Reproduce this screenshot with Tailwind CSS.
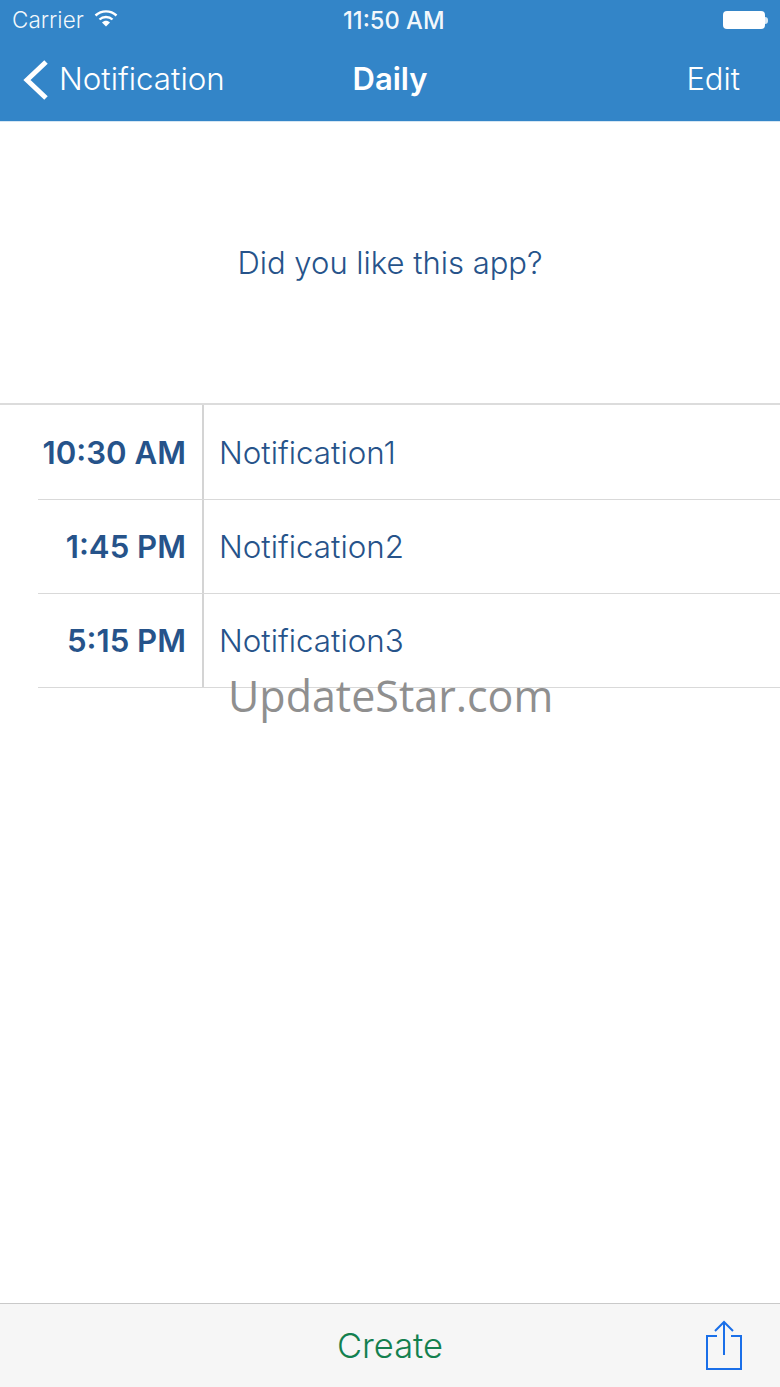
<!DOCTYPE html>
<html lang="en">
<head>
  <meta charset="UTF-8">
  <meta name="viewport" content="width=device-width, initial-scale=1.0">
  <title>Daily</title>
  <script src="https://cdn.jsdelivr.net/npm/@tailwindcss/browser@4"></script>
</head>
<body class="bg-white font-['Inter','Liberation_Sans',sans-serif]">
  <div class="relative flex flex-col w-[780px] h-[1387px] overflow-hidden">

    <!-- status + nav bar -->
    <header class="h-[122px] shrink-0 bg-[#3385c8] text-white border-b border-[#d5e6f3]">
      <div class="relative flex items-center justify-between h-[40px] pl-[12px] pr-[12px]">
        <div class="flex items-center gap-[10px]">
          <span class="text-[22.5px] font-light text-white/95">Carrier</span>
          <svg width="24" height="18" viewBox="0 0 24 18" class="mb-[4px]">
            <path d="M1.5 6.5C7.5 1 16.5 1 22.5 6.5" fill="none" stroke="white" stroke-width="2.4"/>
            <path d="M5.5 10.5C9 7.2 15 7.2 18.500 10.500" fill="none" stroke="white" stroke-width="2.400"/>
            <path d="M8 13.500C10.500 11.300 13.500 11.300 16 13.500L12 17.500Z" fill="white"/>
          </svg>
        </div>
        <span class="absolute left-[343px] top-[3px] text-[23.7px] font-medium text-white/95">11:50 AM</span>
        <div class="flex items-center">
          <div class="w-[42px] h-[18px] rounded-[4px] bg-white border border-white/60"></div>
          <div class="w-[3px] h-[7px] rounded-r-full bg-white/80"></div>
        </div>
      </div>
      <div class="relative flex items-center justify-between h-[81px] pb-[2px]">
        <div class="flex items-center pl-[23px] gap-[10px]">
          <svg width="26" height="42" viewBox="0 0 26 42">
            <path d="M23 3L4 21L23 39" fill="none" stroke="white" stroke-width="5"/>
          </svg>
          <span class="text-[31.3px] font-[350]">Notification</span>
        </div>
        <span class="absolute left-0 right-0 text-center text-[31px] font-semibold">Daily</span>
        <span class="pr-[40px] text-[31px] font-[350]">Edit</span>
      </div>
    </header>

    <!-- question -->
    <div class="flex items-center justify-center h-[281px] pt-[2px] shrink-0 text-[31px] text-[#26538a] font-[350]">
      Did you like this app?
    </div>

    <!-- rows -->
    <section class="border-t-2 border-[#dcdcdc]">
      <div class="flex h-[94px]">
        <div class="flex items-center justify-end w-[204px] pr-[16px] pt-[2px] border-r-2 border-[#d4d4d4] text-[31.2px] font-semibold text-[#26538a]">10:30 AM</div>
        <div class="flex items-center flex-1 pl-[15px] pt-[2px] text-[31.3px] font-[350] text-[#26538a]">Notification1</div>
      </div>
      <div class="flex h-[94px] ml-[38px] border-t border-[#d9d9d9]">
        <div class="flex items-center justify-end w-[166px] pr-[16px] pt-[1px] border-r-2 border-[#d4d4d4] text-[31.2px] font-semibold text-[#26538a]">1:45 PM</div>
        <div class="flex items-center flex-1 pl-[15px] pt-[1px] text-[31.3px] font-[350] text-[#26538a]">Notification2</div>
      </div>
      <div class="flex h-[95px] ml-[38px] border-y border-[#d9d9d9]">
        <div class="flex items-center justify-end w-[166px] pr-[16px] pt-[1px] border-r-2 border-[#d4d4d4] text-[31.2px] font-semibold text-[#26538a]">5:15 PM</div>
        <div class="flex items-center flex-1 pl-[15px] pt-[1px] text-[31.3px] font-[350] text-[#26538a]">Notification3</div>
      </div>
    </section>

    <!-- watermark -->
    <span class="absolute left-[228px] top-[664px] text-[43px] font-['Open_Sans',sans-serif] text-[#8f8f8f]">UpdateStar.com</span>

    <div class="flex-1"></div>

    <!-- toolbar -->
    <footer class="relative flex items-center justify-center h-[84px] shrink-0 bg-[#f6f6f6] border-t border-[#c9c9c9]">
      <span class="text-[34.5px] font-[350] text-[#13804f]">Create</span>
      <svg width="38" height="52" viewBox="0 0 38 52" class="absolute left-[705px] top-[15px]">
        <path d="M12 17H2V50H36V17H26" fill="none" stroke="#1a6fe8" stroke-width="2"/>
        <path d="M19 36V3M10 12L19 3L28 12" fill="none" stroke="#1a6fe8" stroke-width="2"/>
      </svg>
    </footer>
  </div>
</body>
</html>
